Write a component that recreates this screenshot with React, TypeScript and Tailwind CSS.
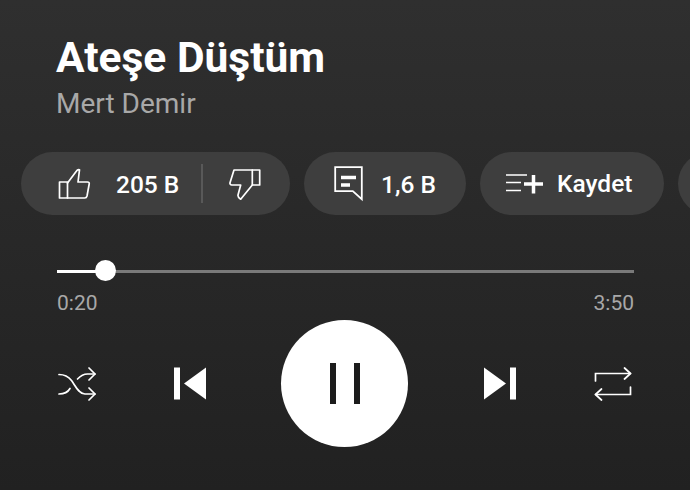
export default function App() {
  return (
    <div className="w-[690px] h-[490px] overflow-hidden flex flex-col bg-gradient-to-b from-[#2f2f2f] to-[#212121] text-white" style={{ fontFamily: "Roboto, sans-serif" }}>
      <div className="pl-[56px] pt-[34px]">
        <h1 className="text-[42.500px] leading-[48px] font-bold">Ateşe Düştüm</h1>
        <p className="text-[28px] leading-[36px] text-[#a8a8a8] mt-[4px]">Mert Demir</p>
      </div>
      <div className="flex gap-[14px] pl-[21px] mt-[30px] h-[63px] shrink-0">
        <div className="w-[269px] shrink-0 rounded-full bg-[#3e3e3e] flex items-center pl-[37px]">
          <svg width="33" height="33" viewBox="0 0 33 33" fill="none" stroke="#fff" strokeWidth="1.700" strokeLinejoin="round" strokeLinecap="round">
            <path d="M1.500 15h8v16h-8z" />
            <path d="M9.500 16L18.500 4c.8-1.300 2-1.500 3-1.200L20 15h9.500c1.300 0 2 .8 1.700 2L29 29c-.3 1.300-1 2-2.300 2H9.500" />
          </svg>
          <span className="ml-[25px] mt-[3px] text-[24.500px] font-medium">205 B</span>
          <div className="w-[2px] h-[39px] bg-[#595959] ml-[22px]" />
          <svg className="ml-[25px]" width="33" height="33" viewBox="0 0 33 33" fill="none" stroke="#fff" strokeWidth="1.700" strokeLinejoin="round" strokeLinecap="round">
            <path d="M24.300 3h7.400v15h-7.400z" />
            <path d="M24.300 3H6L2 15.700c-.3 1.300.5 2.300 1.700 2.300h9L10 28c-.3 1.600.9 3.200 2.700 4.300L24.300 18" />
          </svg>
        </div>
        <div className="w-[162px] shrink-0 rounded-full bg-[#3e3e3e] flex items-center pl-[30px]">
          <svg width="30" height="36" viewBox="0 0 30 36" fill="none" stroke="#fff" strokeWidth="1.800" strokeLinejoin="miter">
            <path d="M1.200 1.200h26.600v32l-9-8H1.200z" />
            <path d="M7 11.500h15M7 19h9" strokeWidth="3.500" />
          </svg>
          <span className="ml-[17px] mt-[3px] text-[24.500px] font-medium">1,6 B</span>
        </div>
        <div className="w-[184px] shrink-0 rounded-full bg-[#3e3e3e] flex items-center pl-[26px]">
          <svg width="37" height="20" viewBox="0 0 37 20" fill="none" stroke="#fff">
            <path d="M0 1h21M0 8.500h15M0 16.500h15" strokeWidth="1.700" />
            <path d="M27.500 1v18.500M18 10h19" strokeWidth="3.500" />
          </svg>
          <span className="ml-[14px] mt-[2px] text-[24.500px] font-medium">Kaydet</span>
        </div>
        <div className="w-[100px] shrink-0 rounded-full bg-[#3e3e3e]" />
      </div>
      <div className="ml-[57px] mr-[56px] mt-[44px] h-[24px] relative flex items-center shrink-0">
        <div className="w-[48px] h-[3px] bg-white" />
        <div className="flex-1 h-[3px] bg-[#7a7a7a]" />
        <div className="absolute left-[38px] top-[1px] w-[21px] h-[21px] rounded-full bg-white" />
      </div>
      <div className="ml-[57px] mr-[56px] mt-[8px] flex justify-between text-[21px] leading-[24px] text-[#a8a8a8]">
        <span>0:20</span>
        <span>3:50</span>
      </div>
      <div className="mt-[5px] ml-[57px] flex items-center h-[127px]">
        <svg width="39" height="36" viewBox="0 0 39 36" fill="none" stroke="#fff" strokeWidth="1.700" strokeLinecap="round" strokeLinejoin="round">
          <path d="M2 8.500c6 0 9 1.500 12.500 6s7 13.500 13.500 13.500h10M2 28c5 0 9-2 11-5.500M20.500 13c3-3.200 6-5 10-5h7.500" />
          <path d="M32 2l6 6-6 6M32 22l6 6-6 6" />
        </svg>
        <svg className="ml-[78px]" width="32" height="33" viewBox="0 0 32 33" fill="#fff">
          <path d="M0 .5h6v32H0zM32 .5v32L10 16.500z" />
        </svg>
        <div className="ml-[75px] w-[127px] h-[127px] rounded-full bg-white flex items-center justify-center gap-[18px]">
          <div className="w-[6px] h-[41px] bg-[#1c1c1c]" />
          <div className="w-[6px] h-[41px] bg-[#1c1c1c]" />
        </div>
        <svg className="ml-[76px]" width="32" height="33" viewBox="0 0 32 33" fill="#fff">
          <path d="M26 .5h6v32h-6zM0 .5v32l22-16z" />
        </svg>
        <svg className="ml-[78px]" width="38" height="34" viewBox="0 0 38 34" fill="none" stroke="#fff" strokeWidth="1.700" strokeLinecap="round" strokeLinejoin="miter">
          <path d="M1.500 14V6.500h35" />
          <path d="M30.500 1l6 5.500-6 5.500" strokeLinejoin="round" />
          <path d="M36.500 20v7.500h-35" />
          <path d="M7.500 22l-6 5.500 6 5.500" strokeLinejoin="round" />
        </svg>
      </div>
    </div>
  );
}
